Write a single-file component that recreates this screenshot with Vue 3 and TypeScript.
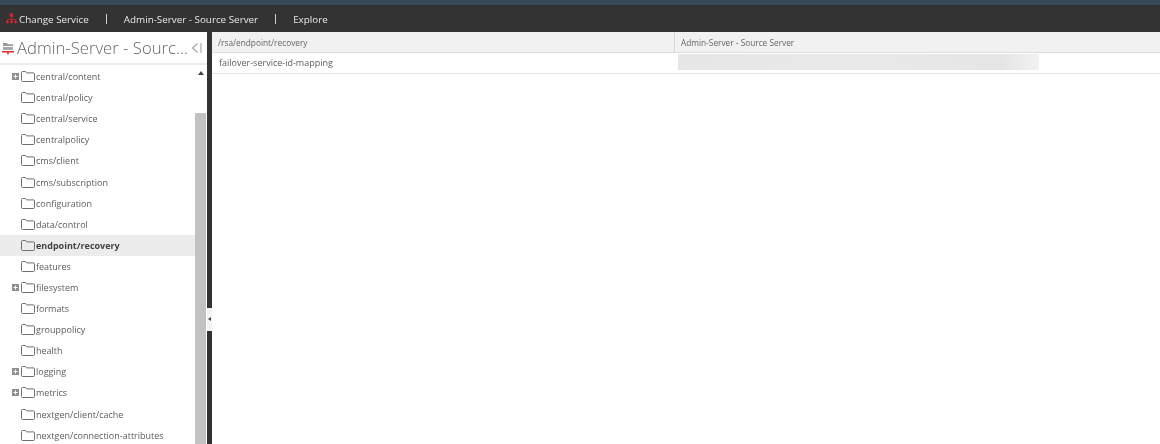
<script setup lang="ts">
interface Node { label: string; expandable?: boolean; selected?: boolean }
const nodes: Node[] = [
  { label: 'central/content', expandable: true },
  { label: 'central/policy' },
  { label: 'central/service' },
  { label: 'centralpolicy' },
  { label: 'cms/client' },
  { label: 'cms/subscription' },
  { label: 'configuration' },
  { label: 'data/control' },
  { label: 'endpoint/recovery', selected: true },
  { label: 'features' },
  { label: 'filesystem', expandable: true },
  { label: 'formats' },
  { label: 'grouppolicy' },
  { label: 'health' },
  { label: 'logging', expandable: true },
  { label: 'metrics', expandable: true },
  { label: 'nextgen/client/cache' },
  { label: 'nextgen/connection-attributes' },
]
</script>

<template>
  <div class="page">
    <div class="strip"></div>
    <header class="topbar">
      <svg class="net" width="11" height="11" viewBox="0 0 12 11">
        <rect x="4.2" y="0" width="3.6" height="3.6" fill="#d8262c" />
        <path d="M6 3.5v3M1.5 8.5v-2h9v2M6 6.5v2" stroke="#d8262c" stroke-width="0.8" fill="none" />
        <rect x="0.2" y="8" width="2.6" height="2.6" fill="#d8262c" />
        <rect x="4.7" y="8" width="2.6" height="2.6" fill="#d8262c" />
        <rect x="9.2" y="8" width="2.6" height="2.6" fill="#d8262c" />
      </svg>
      <span class="link">Change Service</span>
      <span class="sep"></span>
      <span class="link">Admin-Server - Source Server</span>
      <span class="sep"></span>
      <span class="link">Explore</span>
    </header>
    <div class="body">
      <aside class="side">
        <div class="side-head">
          <svg class="srv" width="12" height="14" viewBox="0 0 12 14">
            <path d="M1 2h4l1 1.2h5V5H1z" fill="#9a9a9a" />
            <rect x="1" y="6" width="10" height="3" fill="#a8a8a8" />
            <rect x="0" y="10" width="12" height="1.5" fill="#d8262c" />
            <rect x="5.3" y="11" width="1.4" height="2.4" fill="#d8262c" />
          </svg>
          <span class="side-title">Admin-Server - Sourc...</span>
          <svg class="collapse" width="12" height="12" viewBox="0 0 12 12">
            <path d="M6.5 1.5 1.5 6l5 4.5" fill="none" stroke="#a0a0a0" stroke-width="1.1" />
            <path d="M10 1v10" stroke="#a0a0a0" stroke-width="1.1" />
          </svg>
        </div>
        <div class="tree-wrap">
          <ul class="tree">
            <li v-for="n in nodes" :key="n.label" class="node" :class="{ selected: n.selected }">
              <span class="plus-slot">
                <svg v-if="n.expandable" width="7" height="7" viewBox="0 0 7 7">
                  <rect width="7" height="7" fill="#8f8f8f" />
                  <path d="M3.5 1.5v4M1.5 3.5h4" stroke="#fff" />
                </svg>
              </span>
              <svg class="folder" width="14" height="11" viewBox="0 0 14 11">
                <path d="M.5 1.5a1 1 0 0 1 1-1h3l1.2 1.4h6.8a1 1 0 0 1 1 1v6.6a1 1 0 0 1-1 1h-11a1 1 0 0 1-1-1z" fill="none" stroke="#6f6f6f" />
              </svg>
              <span class="label">{{ n.label }}</span>
            </li>
          </ul>
          <div class="scrollbar">
            <span class="arrow"></span>
            <div class="thumb"></div>
          </div>
        </div>
      </aside>
      <div class="splitter">
        <span class="grip"></span>
      </div>
      <main class="content">
        <div class="thead">
          <div class="cell col1">/rsa/endpoint/recovery</div>
          <div class="cell col2">Admin-Server - Source Server</div>
        </div>
        <div class="row">
          <div class="rowname">failover-service-id-mapping</div>
          <div class="rowval"><div class="redacted"></div></div>
        </div>
      </main>
    </div>
  </div>
</template>

<style>
html, body { margin: 0; background: #fff; overflow: hidden; }
</style>

<style scoped>
.page {
  width: 1160px;
  height: 444px;
  display: flex;
  flex-direction: column;
  overflow: hidden;
  font-family: "Open Sans", "DejaVu Sans", sans-serif;
  color: #555;
  filter: blur(0.5px);
}
.strip { height: 5px; background: #37485a; }
.topbar {
  height: 27px;
  background: #333333;
  display: flex;
  align-items: center;
  padding-left: 6px;
  color: #e8e8e8;
  font-size: 9.85px;
  box-sizing: border-box;
}
.net { margin-right: 2px; }
.sep { width: 1px; height: 10px; background: #cfcfcf; margin: 0 17px; }
.body { flex: 1; display: flex; min-height: 0; }
.side { width: 207px; display: flex; flex-direction: column; background: #fff; }
.side-head {
  height: 33px;
  display: flex;
  align-items: center;
  box-sizing: border-box;
  padding-left: 2px;
  border-bottom: 2px solid #ececec;
}
.srv { flex: none; }
.side-title {
  font-size: 16.7px;
  font-weight: 300;
  color: #666;
  margin-left: 3px;
  white-space: nowrap;
  flex: 1;
}
.collapse { flex: none; margin-right: 4px; }
.tree-wrap { flex: 1; display: flex; min-height: 0; }
.tree { list-style: none; margin: 0; padding: 0; flex: 1; padding-top: 1px; }
.node {
  height: 21.1px;
  display: flex;
  align-items: center;
  font-size: 9px;
  color: #5c5c5c;
}
.node.selected { background: #ececec; font-weight: 700; color: #444; }
.plus-slot { width: 12px; margin-left: 12px; display: flex; align-items: center; flex: none; }
.folder { flex: none; margin-left: -3px; }
.label { margin-left: 1px; white-space: nowrap; }
.scrollbar { width: 12px; background: #fff; position: relative; flex: none; }
.arrow {
  display: block;
  width: 0;
  height: 0;
  margin: 6px auto 0;
  border-left: 3px solid transparent;
  border-right: 3px solid transparent;
  border-bottom: 4px solid #444;
}
.thumb { position: absolute; left: 0; right: 1px; top: 48px; bottom: 0; background: #c2c2c2; }
.splitter { width: 5px; background: #333; position: relative; flex: none; }
.grip {
  position: absolute;
  left: 0;
  top: 276px;
  width: 5px;
  height: 23px;
  background: #f2f2f2;
}
.grip::after {
  content: "";
  position: absolute;
  left: 1px;
  top: 9px;
  border-top: 2.5px solid transparent;
  border-bottom: 2.5px solid transparent;
  border-right: 3px solid #444;
}
.content { flex: 1; min-width: 0; background: #fff; }
.thead {
  height: 21px;
  display: flex;
  background: #f1f1f1;
  box-sizing: border-box;
  border-bottom: 1px solid #dedede;
  font-size: 8.3px;
  color: #666;
}
.cell { display: flex; align-items: center; padding-left: 6px; box-sizing: border-box; }
.col1 { width: 463px; border-right: 1px solid #d6d6d6; }
.col2 { flex: 1; }
.row { height: 21px; display: flex; box-sizing: border-box; border-bottom: 1px solid #e6e6e6; font-size: 9px; color: #5c5c5c; }
.rowname { width: 463px; padding-left: 7px; padding-bottom: 1px; box-sizing: border-box; display: flex; align-items: center; }
.rowval { flex: 1; padding-left: 3px; padding-top: 1px; }
.redacted {
  width: 361px;
  height: 16px;
  background: linear-gradient(90deg, #e6e6e6 0%, #e9e9e9 50%, #e5e5e5 90%, #f2f2f2 100%);
}
</style>
